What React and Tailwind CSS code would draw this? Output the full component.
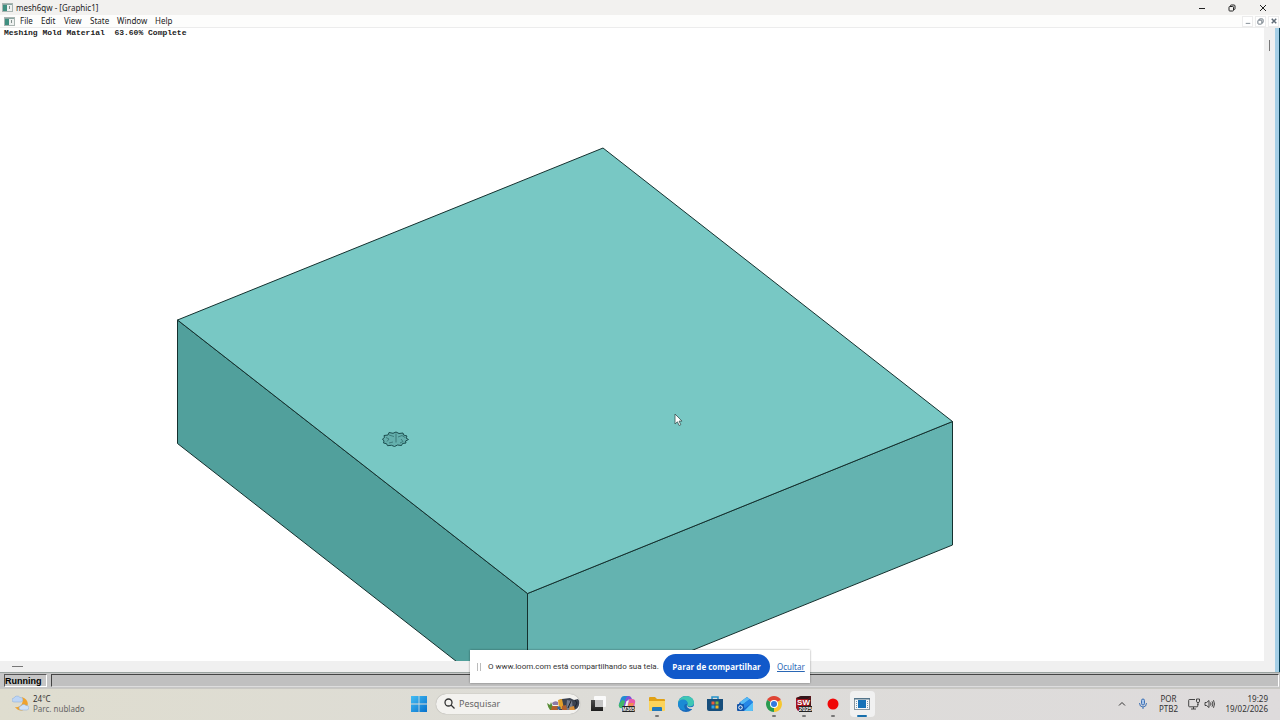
import { useState } from 'react';

const menus = [
  { name: 'File', width: 'w-[21px]' },
  { name: 'Edit', width: 'w-[23px]' },
  { name: 'View', width: 'w-[26px]' },
  { name: 'State', width: 'w-[27px]' },
  { name: 'Window', width: 'w-[38px]' },
  { name: 'Help', width: 'w-6' },
];

function AppIcon() {
  return (
    <svg className="h-[9px] w-[11px] shrink-0" viewBox="0 0 11 9">
      <rect x="0.5" y="0.5" width="10" height="8" fill="#eef1f0" stroke="#a9b4b1" />
      <rect x="1" y="2" width="4" height="6" fill="#3f8f80" />
      <rect x="1" y="1" width="9" height="1" fill="#8aa5a0" />
      <rect x="7" y="3" width="1" height="3" fill="#83908d" />
    </svg>
  );
}

function MinimizeIcon({ className }) {
  return (
    <svg className={className} viewBox="0 0 8 8" fill="none" stroke="currentColor">
      <path d="M1 4.5h6" />
    </svg>
  );
}

function RestoreIcon({ className }) {
  return (
    <svg className={className} viewBox="0 0 8 8" fill="none" stroke="currentColor">
      <rect x="1" y="2.5" width="4.5" height="4.5" rx="0.8" />
      <path d="M2.5 2.2V1.6Q2.5 1 3.2 1H6q1 0 1 1v2.8q0 .7-.7.7h-.6" />
    </svg>
  );
}

function CloseIcon({ className }) {
  return (
    <svg className={className} viewBox="0 0 8 8" fill="none" stroke="currentColor">
      <path d="M1 1l6 6M7 1L1 7" />
    </svg>
  );
}

function TitleBar() {
  return (
    <header className="flex h-[15px] shrink-0 items-center bg-[#f2f1ef] pr-px pl-0.5 text-[#222]">
      <AppIcon />
      <h1 className="ml-[3px] flex-1 text-[8px] leading-[10px]">mesh6qw - [Graphic1]</h1>
      <div className="flex items-center">
        <button aria-label="Minimize" className="flex w-[30px] justify-center">
          <MinimizeIcon className="size-2" />
        </button>
        <button aria-label="Restore" className="flex w-[30px] justify-center">
          <RestoreIcon className="size-2" />
        </button>
        <button aria-label="Close" className="flex w-8 justify-center">
          <CloseIcon className="size-2" />
        </button>
      </div>
    </header>
  );
}

function MenuBar() {
  return (
    <nav className="flex h-[13px] shrink-0 items-center border-b border-[#ececec] bg-[#fdfdfc] pr-px pl-1 text-[#222]">
      <AppIcon />
      <div className="ml-[5px] flex flex-1 items-center text-[8px] leading-[10px]">
        {menus.map((menu) => (
          <button key={menu.name} className={`text-left whitespace-nowrap ${menu.width}`}>
            {menu.name}
          </button>
        ))}
      </div>
      <div className="flex items-center gap-0.5 text-[#5f6b76]">
        <button aria-label="Minimize document" className="flex h-[11px] w-[11px] items-end justify-center border border-[#ececec] bg-white">
          <MinimizeIcon className="size-1.5" />
        </button>
        <button aria-label="Restore document" className="flex h-[11px] w-[11px] items-center justify-center border border-[#ececec] bg-white">
          <RestoreIcon className="size-[7px]" />
        </button>
        <button aria-label="Close document" className="flex h-[11px] w-[11px] items-center justify-center border border-[#ececec] bg-white">
          <CloseIcon className="size-1.5 stroke-2" />
        </button>
      </div>
    </nav>
  );
}

function MoldBlock() {
  return (
    <svg
      className="absolute inset-0 size-full"
      viewBox="0 28 1264 633"
      preserveAspectRatio="xMidYMid slice"
      role="img"
      aria-label="Mold block"
    >
      <g stroke="#14302e" strokeWidth="1" strokeLinejoin="round">
        <path d="M177.5 320L527.5 593.5V717L177.5 443.5z" fill="#51a09c" />
        <path d="M527.5 593.5L952.5 421.5V545L527.5 717z" fill="#64b3b0" />
        <path d="M603 148L952.5 421.5L527.5 593.5L177.5 320z" fill="#78c8c4" />
      </g>
      {/* feeder opening on the top face */}
      <path
        d="M382.500 439l2-1.500-.5-2 4-.5 1-2.500 4 .8 3-1.300 3 1.500 4-.5.5 2 3.500 1-1 2 2.500 1.500-3 1.500.5 2-3.500.5-1 2-4-.5-3 1.500-3-1.200-4 .4-1-2-3-.7.500-2z"
        fill="#64b0ad"
        stroke="#1b4d4e"
        strokeLinejoin="round"
      />
      <path
        d="M386 437.500l3 1.500-2 2.500M389 435l5 1.500M396 433.500v9M398 437l4-1.500 3 2M401 439l2 2.500-3 1.500M389 443l4-1"
        fill="none"
        stroke="#2c6666"
        strokeWidth="0.7"
      />
    </svg>
  );
}

function Pointer() {
  return (
    <svg className="absolute top-[385px] left-[674px] h-[14px] w-[9px]" viewBox="0 0 9 14">
      <path d="M1 1v10l2.400-2.200 1.700 3.700 1.700-.8-1.700-3.600H8z" fill="#fff" stroke="#35504f" strokeWidth="0.8" />
    </svg>
  );
}

function ShareBar({ onHide }) {
  return (
    <div className="absolute bottom-[37px] left-1/2 flex h-[33px] w-[340px] -translate-x-1/2 items-center bg-white pl-[7px] text-[8px] text-[#333] shadow-[0_0_2px_rgba(0,0,0,0.4)]">
      <span className="mr-[7px] flex h-2 w-1 justify-between border-x border-[#bbb]" />
      <p className="w-[175px] font-['Roboto',sans-serif] whitespace-nowrap">O www.loom.com está compartilhando sua tela.</p>
      <button className="h-[25px] w-[107px] rounded-full bg-[#1259ca] font-['Open_Sans',sans-serif] font-bold whitespace-nowrap text-white">
        Parar de compartilhar
      </button>
      <a
        href="#ocultar"
        className="ml-[7px] text-[#2a67b5] underline"
        onClick={(e) => {
          e.preventDefault();
          onHide();
        }}
      >
        Ocultar
      </a>
    </div>
  );
}

function WeatherIcon() {
  return (
    <svg className="h-[17px] w-[17px]" viewBox="0 0 17 17">
      <path d="M10 2c6 2 8 8 3 12-4 3-8 1-10-2 6 1 9-4 7-10z" fill="#efa32f" />
      <path d="M2 7a2 2 0 010-4 3.500 3.500 0 016-.5A2.300 2.300 0 019 7z" fill="#bdd5f5" stroke="#86abd9" strokeWidth="0.5" />
      <path d="M9 15a2 2 0 010-4 3 3 0 015-.5 2.300 2.300 0 011 4.500z" fill="#cfe2fa" stroke="#86abd9" strokeWidth="0.5" />
    </svg>
  );
}

function WindowsLogo() {
  return (
    <svg className="size-4" viewBox="0 0 16 16">
      <defs>
        <linearGradient id="win" x1="0" y1="0" x2="1" y2="1">
          <stop offset="0" stopColor="#44bdf3" />
          <stop offset="1" stopColor="#0671cd" />
        </linearGradient>
      </defs>
      <path d="M0 0h7.600v7.600H0zM8.400 0H16v7.600H8.400zM0 8.400h7.600V16H0zM8.400 8.400H16V16H8.400z" fill="url(#win)" />
    </svg>
  );
}

function SearchArt() {
  return (
    <svg className="h-[14px] w-[33px] shrink-0" viewBox="0 0 33 14">
      <path d="M12 3l3-1 8-1 4 2 4-1q2 2 1 6-1 4-5 5H12z" fill="#3b4250" />
      <path d="M20 3l5 1 1 9h-7z" fill="#747b8b" />
      <path d="M28 3l2 3-3 6M24 4l-3 7" stroke="#1d222c" fill="none" />
      <path d="M11 3l4-1 2 10h-5z" fill="#e4a029" />
      <path d="M5 6q3-3 6-1v3H6z" fill="#8d7aa5" />
      <path d="M0 6l3 2 1-3 3 8H3Q1 11 0 6z" fill="#588d35" />
      <path d="M5 9h6v4H4zM15 9l4-1 1 5h-5z" fill="#b2612e" />
      <path d="M23 10l4-1 1 4h-6z" fill="#d98f38" />
      <circle cx="12" cy="11" r="1.800" fill="#37659b" />
    </svg>
  );
}

function TaskViewIcon() {
  return (
    <svg className="size-4" viewBox="0 0 16 16">
      <defs>
        <linearGradient id="pane" x1="0" y1="0" x2="0" y2="1">
          <stop offset="0" stopColor="#4a4a4a" />
          <stop offset="1" stopColor="#1c1c1c" />
        </linearGradient>
      </defs>
      <rect x="4" y="0" width="12" height="11" rx="1" fill="#fafafa" />
      <path d="M1 4h4v7h8v4H1z" fill="url(#pane)" />
      <path d="M5 4h8v7H5z" fill="#c4c4c4" />
    </svg>
  );
}

function CopilotIcon() {
  return (
    <svg className="size-[18px]" viewBox="0 0 18 18">
      <path d="M6 1h5l2 3-4 1-2 8H4q-4 0-3-4l2-6q1-2 3-2z" fill="#228bd3" />
      <path d="M11 1q2 0 3 3h-4L8 10l-1 3H4l4-10q1-2 3-2z" fill="#8253d6" />
      <path d="M11 4h3q4 0 3 4l-1 4-3 3H9z" fill="#e85aab" />
      <path d="M1 9l3-4 3 1-2 7q-5 1-4-4z" fill="#40b768" />
      <path d="M11 8h5l-2 5H9z" fill="#f28b52" />
      <path d="M8.500 6h2L9 11H7z" fill="#f4f4f4" />
      <rect x="4" y="11" width="13" height="6" rx="1" fill="#222" />
      <text x="10.500" y="16" textAnchor="middle" fontSize="5" fontWeight="700" fill="#fff" fontFamily="Liberation Sans">M365</text>
    </svg>
  );
}

function FolderIcon() {
  return (
    <svg className="size-[18px]" viewBox="0 0 18 18">
      <path d="M1 3q0-1 1-1h5l2 2h7q1 0 1 1v6H1z" fill="#e1a116" />
      <path d="M1 6h16v9q0 1-1 1H2q-1 0-1-1z" fill="#fbd35a" />
      <path d="M4 16v-3q0-1 1-1h8q1 0 1 1v3z" fill="#2179bc" />
    </svg>
  );
}

function EdgeIcon() {
  return (
    <svg className="size-[18px]" viewBox="0 0 18 18">
      <circle cx="9" cy="9" r="8" fill="#1769bb" />
      <path d="M1 9C1 4 5 1 9 1c5 0 8 3 8 6.500 0 3-2 4-4.500 4-2 0-3-1-2-2.300C11 6 7 4.500 4 6 2 7 1 8 1 9z" fill="#3fc6b4" />
      <path d="M1 9c0-3 3-5 6-4.500 3 .5 4 3 3.500 4.700C7 8 6 12 9 15c-4 1-8-2-8-6z" fill="#1b8bd4" />
      <path d="M10.500 9q-1.500 2.500 2 3.200 2.500.3 4.500-1.200l1 1-1.500 2q-4 .5-6-1.500-1.500-1.500 0-3.500z" fill="#dedcdb" />
    </svg>
  );
}

function StoreIcon() {
  return (
    <svg className="size-[18px]" viewBox="0 0 18 18">
      <path d="M6 4V2h6v2" fill="none" stroke="#2492cc" strokeWidth="1.500" />
      <path d="M1 4h16v10q0 2-2 2H3q-2 0-2-2z" fill="#174e7b" />
      <path d="M5.500 6.500h3v3h-3z" fill="#ee5c38" />
      <path d="M9.500 6.500h3v3h-3z" fill="#83b83b" />
      <path d="M5.500 10.500h3v3h-3z" fill="#2fa4e7" />
      <path d="M9.500 10.500h3v3h-3z" fill="#f6b922" />
    </svg>
  );
}

function OutlookIcon() {
  return (
    <svg className="size-[18px]" viewBox="0 0 18 18">
      <path d="M3 8l8-6 6 5v8q0 1-1 1H4z" fill="#1767cc" />
      <path d="M4 7l7-5 3 2-8 6z" fill="#55b9f4" />
      <path d="M8 16l9-9v8q0 1-1 1z" fill="#59c1f7" />
      <path d="M6 10l8-6 3 3-8 6z" fill="#2487e7" />
      <rect x="1" y="9" width="7" height="7" rx="1" fill="#1455a8" />
      <circle cx="4.500" cy="12.500" r="1.800" fill="none" stroke="#fff" />
    </svg>
  );
}

function ChromeIcon() {
  return (
    <svg className="size-[18px]" viewBox="0 0 18 18">
      <path d="M9 9L2.100 5A8 8 0 0115.900 5z" fill="#df4535" />
      <path d="M9 9l6.900-4A8 8 0 019 17z" fill="#f6c62d" />
      <path d="M9 9v8A8 8 0 012.100 5z" fill="#299b50" />
      <circle cx="9" cy="9" r="4" fill="#fff" />
      <circle cx="9" cy="9" r="3" fill="#3279de" />
    </svg>
  );
}

function SolidWorksIcon() {
  return (
    <svg className="size-[18px]" viewBox="0 0 18 18">
      <path d="M1 3l5-2h10v11l-3 4H3L1 13z" fill="#a3141c" />
      <path d="M1 3l5-2h10l-3 3H3z" fill="#31171b" />
      <path d="M13 4l3-3v11l-3 4z" fill="#52151a" />
      <text x="8.500" y="10" textAnchor="middle" fontSize="8" fontWeight="700" fill="#fff" fontFamily="Liberation Sans">SW</text>
      <rect x="4" y="11" width="13" height="6" fill="#222" />
      <text x="10.500" y="16" textAnchor="middle" fontSize="6" fontWeight="700" fill="#fff" fontFamily="Liberation Sans">2025</text>
    </svg>
  );
}

function RecordIcon() {
  return (
    <svg className="size-[18px]" viewBox="0 0 18 18">
      <circle cx="9" cy="9" r="5.500" fill="#f00808" />
    </svg>
  );
}

function MeshIcon() {
  return (
    <svg className="size-[18px]" viewBox="0 0 18 18">
      <rect x="1.500" y="3.500" width="15" height="11" fill="#f6f8f9" stroke="#8a98a2" />
      <rect x="1" y="3" width="16" height="1.500" fill="#53748a" />
      <rect x="5" y="5" width="8" height="8" fill="#1671b8" />
      <path d="M3.500 6v7M14.500 6v7" stroke="#7795ab" strokeDasharray="1 1" />
    </svg>
  );
}

const pinned = [
  { name: 'Task view', Icon: TaskViewIcon },
  { name: 'Microsoft 365', Icon: CopilotIcon },
  { name: 'File Explorer', Icon: FolderIcon, running: true },
  { name: 'Edge', Icon: EdgeIcon },
  { name: 'Store', Icon: StoreIcon },
  { name: 'Outlook', Icon: OutlookIcon },
  { name: 'Chrome', Icon: ChromeIcon, running: true },
  { name: 'SolidWorks', Icon: SolidWorksIcon, running: true },
  { name: 'Recorder', Icon: RecordIcon, running: true },
  { name: 'mesh6qw', Icon: MeshIcon, active: true },
];

function TaskbarButton({ item }) {
  const { name, Icon, running, active } = item;
  return (
    <button
      aria-label={name}
      className={`relative mx-0.5 flex h-[26px] flex-1 items-center justify-center rounded-sm ${active ? 'bg-[#f1f1f1]' : ''}`}
    >
      <Icon />
      {running && <span className="absolute bottom-0 h-0.5 w-1 rounded-full bg-[#777]" />}
      {active && <span className="absolute bottom-0 h-0.5 w-2.5 rounded-full bg-[#176fac]" />}
    </button>
  );
}

function Tray() {
  return (
    <div className="flex flex-1 items-center justify-end pr-3 text-[8px] leading-[10px] text-[#333]">
      <button aria-label="Show hidden icons">
        <svg className="size-2" viewBox="0 0 8 8" fill="none" stroke="currentColor">
          <path d="M1 5.500l3-3 3 3" />
        </svg>
      </button>
      <button aria-label="Microphone" className="ml-3">
        <svg className="h-3 w-2.5" viewBox="0 0 10 12" fill="none" stroke="#3c70b5">
          <rect x="3.500" y="1" width="3" height="6" rx="1.500" fill="#a6c4eb" />
          <path d="M1.500 5q0 4 3.500 4t3.500-4M5 9v2" />
        </svg>
      </button>
      <button className="ml-2.5 w-5 text-center">
        POR
        <br />
        PTB2
      </button>
      <button aria-label="Network and volume" className="ml-2.5 flex items-center gap-1">
        <svg className="size-3" viewBox="0 0 12 12" fill="none" stroke="currentColor" strokeWidth="0.900">
          <path d="M7 1.500H1.500q-.8 0-.8.8V8q0 .8.800.800H9q.8 0 .8-.8V6M3 11h5M5.500 9v2" />
          <path d="M8.500 1h3v2.500q0 1-1.500 1t-1.500-1zM10 4.500V7" />
        </svg>
        <svg className="h-2.5 w-[11px]" viewBox="0 0 11 10" fill="none" stroke="currentColor" strokeWidth="0.900">
          <path d="M1 3.500h1.500L5 1.500v7L2.500 6.500H1zM6.500 3.500q1 1.500 0 3M8 2.300q1.800 2.700 0 5.400M9.500 1.200q2 3.800 0 7.600" />
        </svg>
      </button>
      <time dateTime="2026-02-19T19:29" className="ml-2.5 text-right">
        19:29
        <br />
        19/02/2026
      </time>
    </div>
  );
}

function Taskbar() {
  return (
    <footer className="flex h-8 shrink-0 items-center border-t border-[#c9c8c3] bg-linear-to-r from-[#dfddcf] via-[#dddcd8] to-[#dedbdc] pb-0.5">
      <div className="flex flex-1 items-center gap-1 pl-3 text-[8px] leading-[10px]">
        <WeatherIcon />
        <div>
          <p className="text-[#333]">24°C</p>
          <p className="text-[#666]">Parc. nublado</p>
        </div>
      </div>
      <div className="flex items-center pl-2">
        <button aria-label="Start" className="mr-[9px]">
          <WindowsLogo />
        </button>
        <label className="flex h-5 w-36 items-center overflow-hidden rounded-full bg-[#f3f2ef] pl-2 shadow-[0_0_1px_rgba(0,0,0,0.4)]">
          <svg className="size-[11px] shrink-0" viewBox="0 0 11 11" fill="none" stroke="#333" strokeWidth="1.300">
            <circle cx="4.500" cy="4.500" r="3.500" />
            <path d="M7 7l3.500 3.500" />
          </svg>
          <input
            type="search"
            aria-label="Pesquisar"
            placeholder="Pesquisar"
            className="ml-1 min-w-0 flex-1 bg-transparent text-[9px] outline-none placeholder:text-[#666]"
          />
          <SearchArt />
        </label>
        <div className="ml-[3px] flex w-[294px]">
          {pinned.map((item) => (
            <TaskbarButton key={item.name} item={item} />
          ))}
        </div>
      </div>
      <Tray />
    </footer>
  );
}

export default function App() {
  const [sharing, setSharing] = useState(true);

  return (
    <div className="relative flex h-screen flex-col overflow-hidden bg-white font-['Noto_Sans',sans-serif]">
      <TitleBar />
      <MenuBar />
      <div className="flex min-h-0 flex-1">
        <main className="flex min-w-0 flex-1 flex-col">
          <section className="relative min-h-0 flex-1 overflow-hidden bg-white">
            <MoldBlock />
            <p className="relative pt-px pl-1 font-['Liberation_Mono',monospace] text-[8px] leading-2 font-bold whitespace-pre text-[#222]">
              {'Meshing Mold Material  63.60% Complete'}
            </p>
            <Pointer />
          </section>
          <div className="flex h-[11px] items-center bg-[#f0f0f0] pl-3">
            <span className="h-px w-[11px] bg-[#777]" />
          </div>
        </main>
        <div className="flex w-[11px] justify-center bg-[#f0f0f0] pt-3">
          <span className="h-[11px] w-px bg-[#777]" />
        </div>
        <div className="w-[5px] border-r border-[#073f55] bg-[#a5cfe6]" />
      </div>
      <div className="flex h-4 shrink-0 gap-1 border-t border-[#9aa3a0] bg-[#c6c6c6] p-px font-['Liberation_Sans',sans-serif] text-[9px] leading-3 font-bold text-black">
        <p className="ml-[3px] w-[43px] border border-[#555] border-r-white border-b-white">Running</p>
        <p className="flex-1 border border-[#444] border-r-white border-b-[#ddd] bg-[#c0c0c0]" />
      </div>
      <Taskbar />
      {sharing && <ShareBar onHide={() => setSharing(false)} />}
    </div>
  );
}
